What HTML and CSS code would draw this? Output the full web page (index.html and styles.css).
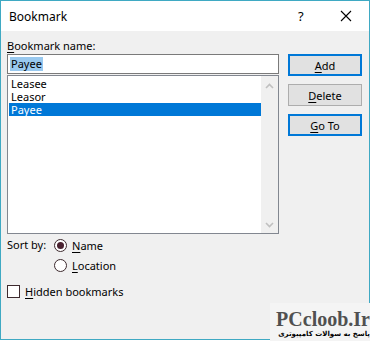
FILE: index.html
```html
<!DOCTYPE html>
<html>
<head>
  <title>Bookmark</title>
  <link rel="stylesheet" href="styles.css">
</head>
<body>
  <div class="window">
    <div class="titlebar">
      <span class="title">Bookmark</span>
      <span class="help">?</span>
      <span class="close">
        <svg width="12" height="12" viewBox="0 0 12 12">
          <path d="M1 1 L11 11 M11 1 L1 11" stroke="#000" stroke-width="1.1" fill="none"/>
        </svg>
      </span>
    </div>

    <div class="content">
      <div class="main">
        <div class="left">
          <div class="label"><u>B</u>ookmark name:</div>
          <div class="name-input"><span class="selected-text">Payee</span></div>
          <div class="listbox">
            <div class="items">
              <div class="item">Leasee</div>
              <div class="item">Leasor</div>
              <div class="item active">Payee</div>
            </div>
            <div class="scrollbar">
              <svg width="9" height="6" viewBox="0 0 9 6">
                <path d="M1 5 L4.5 1.5 L8 5" stroke="#c0c0c0" stroke-width="1.6" fill="none"/>
              </svg>
              <svg width="9" height="6" viewBox="0 0 9 6">
                <path d="M1 1 L4.5 4.5 L8 1" stroke="#c0c0c0" stroke-width="1.6" fill="none"/>
              </svg>
            </div>
          </div>
        </div>

        <div class="buttons">
          <div class="button default"><span><u>A</u>dd</span></div>
          <div class="button"><span><u>D</u>elete</span></div>
          <div class="button default"><span><u>G</u>o To</span></div>
        </div>
      </div>

      <div class="sort">
        <div class="sort-label">Sort by:</div>
        <div class="options">
          <div class="option"><span class="radio checked"></span><span><u>N</u>ame</span></div>
          <div class="option"><span class="radio"></span><span><u>L</u>ocation</span></div>
        </div>
      </div>

      <div class="check-row"><span class="checkbox"></span><span><u>H</u>idden bookmarks</span></div>
    </div>
  </div>

  <div class="watermark">
    <div class="wm-site">PCcloob.Ir</div>
    <div class="wm-tag">پاسخ به سوالات کامپیوتری</div>
  </div>
</body>
</html>
```

FILE: styles.css
```css
body {
    margin: 0;
    background-color: #ffffff;
    font-family: "Noto Sans", "Open Sans", sans-serif;
    font-size: 11px;
    color: #000000;
  }

  u {
    text-decoration-thickness: 1px;
    text-underline-offset: 2px;
  }

  .window {
    width: 370px;
    height: 340px;
    box-sizing: border-box;
    border: 1px solid #3fa9c3;
    display: flex;
    flex-direction: column;
  }

  .titlebar {
    height: 30px;
    flex: 0 0 30px;
    background-color: #ffffff;
    display: flex;
    align-items: center;
    font-size: 12px;
  }

  .title {
    margin-left: 8px;
    flex: 1;
  }

  .help {
    width: 14px;
    font-size: 13px;
    margin-right: 28px;
  }

  .close {
    width: 12px;
    height: 12px;
    margin-right: 17px;
    display: flex;
  }

  .content {
    flex: 1;
    background-color: #f0f0f0;
    padding: 7px 0 0 6px;
  }

  .main {
    display: flex;
  }

  .left {
    width: 272px;
  }

  .label {
    height: 15px;
    line-height: 15px;
    margin-bottom: 1px;
  }

  .name-input {
    height: 20px;
    box-sizing: border-box;
    border: 1px solid #7a7a7a;
    background-color: #ffffff;
    padding-left: 2px;
    display: flex;
    align-items: center;
  }

  .selected-text {
    background-color: #99c9ef;
    line-height: 14px;
    padding: 0 1px;
  }

  .listbox {
    margin-top: 1px;
    height: 159px;
    box-sizing: border-box;
    border: 1px solid #828790;
    background-color: #ffffff;
    display: flex;
  }

  .items {
    flex: 1;
    padding: 1px 0 0 1px;
  }

  .item {
    height: 13px;
    line-height: 13px;
    padding-left: 2px;
  }

  .item.active {
    background-color: #0078d7;
    color: #ffffff;
  }

  .scrollbar {
    width: 17px;
    background-color: #f0f0f0;
    display: flex;
    flex-direction: column;
    justify-content: space-between;
    align-items: center;
    padding: 7px 0 5px;
    box-sizing: border-box;
  }

  .buttons {
    margin-left: 9px;
    padding-top: 16px;
    display: flex;
    flex-direction: column;
    gap: 8px;
  }

  .button {
    width: 74px;
    height: 22px;
    box-sizing: border-box;
    border: 1px solid #adadad;
    background-color: #e1e1e1;
    display: flex;
    align-items: center;
    justify-content: center;
  }

  .button.default {
    border: 2px solid #0078d7;
  }

  .sort {
    margin-top: 1px;
    display: flex;
  }

  .sort-label {
    width: 47px;
    height: 20px;
    line-height: 20px;
  }

  .option {
    height: 20px;
    display: flex;
    align-items: center;
    gap: 5px;
  }

  .radio {
    width: 13px;
    height: 13px;
    box-sizing: border-box;
    border: 1px solid #3d2a2e;
    border-radius: 50%;
    background-color: #ffffff;
    display: flex;
    align-items: center;
    justify-content: center;
  }

  .radio.checked::after {
    content: "";
    width: 7px;
    height: 7px;
    border-radius: 50%;
    background-color: #4a2230;
  }

  .check-row {
    margin-top: 6px;
    height: 20px;
    display: flex;
    align-items: center;
    gap: 5px;
  }

  .checkbox {
    width: 13px;
    height: 13px;
    box-sizing: border-box;
    border: 1px solid #3d2a2e;
    background-color: #ffffff;
  }

  .watermark {
    position: absolute;
    left: 270px;
    top: 303px;
    width: 100px;
    height: 38px;
    background-color: #f4f4f4;
    text-align: right;
  }

  .wm-site {
    font-family: "Liberation Serif", serif;
    font-weight: bold;
    font-size: 20px;
    line-height: 20px;
    color: #505050;
    margin-top: 6px;
  }

  .wm-tag {
    font-family: "DejaVu Sans", sans-serif;
    font-weight: bold;
    font-size: 7px;
    line-height: 11px;
    white-space: nowrap;
    direction: rtl;
  }
```
